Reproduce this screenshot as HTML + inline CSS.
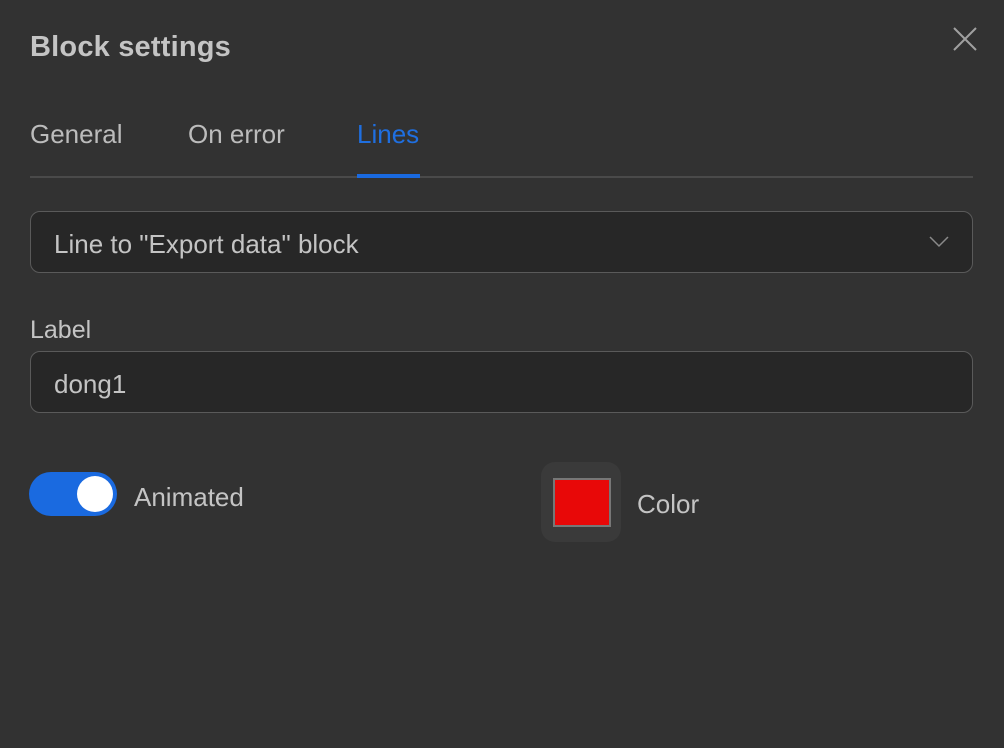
<!DOCTYPE html>
<html><head><style>
body{margin:0;width:1004px;height:748px;background:#323232;font-family:"Liberation Sans",sans-serif;color:#c8c8c8;position:relative;overflow:hidden}
.a{position:absolute}
</style></head><body>
<div class="a" style="left:30px;top:31px;font-size:29px;font-weight:bold;color:#c4c4c4;letter-spacing:0.2px">Block settings</div>
<svg class="a" style="left:952px;top:26px" width="26" height="26"><path d="M2 2L24 24M24 2L2 24" stroke="#a0a0a0" stroke-width="2"/></svg>
<div class="a" style="left:30px;top:119px;font-size:26px;color:#bcbcbc">General</div>
<div class="a" style="left:188px;top:119px;font-size:26px;color:#bcbcbc">On error</div>
<div class="a" style="left:357px;top:119px;font-size:26px;color:#1f6fe0">Lines</div>
<div class="a" style="left:30px;top:176px;width:943px;height:2px;background:#4a4a4a"></div>
<div class="a" style="left:357px;top:174px;width:63px;height:4px;background:#1a6ae0"></div>
<div class="a" style="left:30px;top:211px;width:941px;height:60px;border:1.5px solid #5a5a5a;border-radius:10px;background:#272727"></div>
<div class="a" style="left:54px;top:229px;font-size:26px;color:#c4c4c4">Line to "Export data" block</div>
<svg class="a" style="left:928px;top:235px" width="22" height="14"><path d="M2 2L11 11L20 2" stroke="#8a8a8a" stroke-width="1.5" fill="none"/></svg>
<div class="a" style="left:30px;top:316px;font-size:25px;color:#c4c4c4">Label</div>
<div class="a" style="left:30px;top:351px;width:941px;height:60px;border:1.5px solid #5a5a5a;border-radius:10px;background:#272727"></div>
<div class="a" style="left:54px;top:369px;font-size:26px;color:#c4c4c4">dong1</div>
<div class="a" style="left:29px;top:472px;width:88px;height:44px;border-radius:22px;background:#1a6ae0"></div>
<div class="a" style="left:77px;top:476px;width:36px;height:36px;border-radius:50%;background:#fff"></div>
<div class="a" style="left:134px;top:482px;font-size:26px;color:#c4c4c4">Animated</div>
<div class="a" style="left:541px;top:462px;width:80px;height:80px;border-radius:14px;background:#3a3a3a"></div>
<div class="a" style="left:553px;top:478px;width:54px;height:45px;background:#e80808;border:2px solid #777"></div>
<div class="a" style="left:637px;top:489px;font-size:26px;color:#c4c4c4">Color</div>
</body></html>
